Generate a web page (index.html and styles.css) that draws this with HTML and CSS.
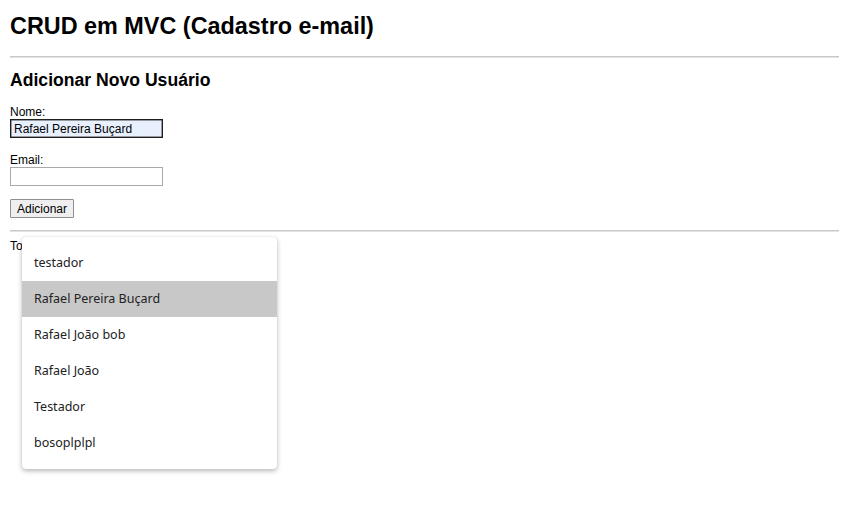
FILE: index.html
```html
<!DOCTYPE html>
<html lang="pt-BR">
<head>
<meta charset="utf-8">
<title>CRUD em MVC</title>
<link rel="stylesheet" href="styles.css">
</head>
<body>
<div class="page">
  <h1 class="title">CRUD em MVC (Cadastro e-mail)</h1>
  <hr class="rule rule-top">
  <h2 class="subtitle">Adicionar Novo Usuário</h2>
  <form class="form">
    <div class="field field-name">
      <label class="label" for="nome">Nome:</label>
      <input class="input input-filled" id="nome" type="text" value="Rafael Pereira Buçard">
    </div>
    <div class="field field-email">
      <label class="label" for="email">Email:</label>
      <input class="input" id="email" type="text">
    </div>
    <button class="button" type="button">Adicionar</button>
  </form>
  <hr class="rule rule-bottom">
  <div class="list-area">
    <p class="total">Total de usuários</p>
    <ul class="menu">
      <li class="menu-item">testador</li>
      <li class="menu-item menu-item-active">Rafael Pereira Buçard</li>
      <li class="menu-item">Rafael João bob</li>
      <li class="menu-item">Rafael João</li>
      <li class="menu-item">Testador</li>
      <li class="menu-item">bosoplplpl</li>
    </ul>
  </div>
</div>
</body>
</html>
```
FILE: styles.css
```css
* { box-sizing: border-box; }
html, body { margin: 0; padding: 0; background: #fff; }
body {
  font-family: "Liberation Sans", Arial, sans-serif;
  color: #000;
  font-size: 12px;
}
.page { padding: 12px 10px 0 10px; min-height: 523px; }
.title {
  margin: 0;
  font-size: 23.4px;
  line-height: 28px;
  font-weight: bold;
}
.rule {
  margin: 0;
  height: 2px;
  border: 0;
  border-top: 1px solid #c8c8c8;
  border-bottom: 1px solid #e2e2e2;
}
.rule-top { margin-top: 16px; }
.subtitle {
  margin: 11px 0 0 0;
  font-size: 17.6px;
  line-height: 22px;
  font-weight: bold;
}
.form { margin-top: 14px; }
.field { display: flex; flex-direction: column; align-items: flex-start; }
.field-name { margin-bottom: 15px; }
.field-email { margin-bottom: 13px; }
.label { line-height: 14px; height: 14px; }
.input {
  width: 153px;
  height: 19px;
  padding: 1px 3px;
  font-family: "Liberation Sans", Arial, sans-serif;
  font-size: 12px;
  border: 1px solid #a9a9a9;
  background: #fff;
  color: #000;
}
.input-filled {
  background: #e8f0fe;
  border: 1px solid #1f1f1f;
  box-shadow: inset 0 0 0 0.5px #444;
}
.button {
  display: block;
  margin: 0;
  height: 19px;
  width: 64px;
  padding: 0 6px;
  font-family: "Liberation Sans", Arial, sans-serif;
  font-size: 12px;
  background: #efefef;
  border: 1px solid #8f8f8f;
  border-radius: 1px;
  color: #000;
}
.rule-bottom { margin-top: 12px; }
.list-area { position: relative; }
.total { margin: 7px 0 0 0; line-height: 14px; }
.menu {
  position: absolute;
  left: 12px;
  top: -2px;
  width: 255px;
  margin: 0;
  padding: 8px 0;
  list-style: none;
  background: #fff;
  border-radius: 4px;
  box-shadow: 0 2px 5px rgba(0,0,0,0.28), 0 0 1px rgba(0,0,0,0.12);
  font-family: "Noto Sans", "Open Sans", sans-serif;
  font-size: 12.5px;
  color: #222;
}
.menu-item {
  height: 36px;
  line-height: 36px;
  padding: 0 12px;
}
.menu-item-active { background: #c8c8c8; }
```
